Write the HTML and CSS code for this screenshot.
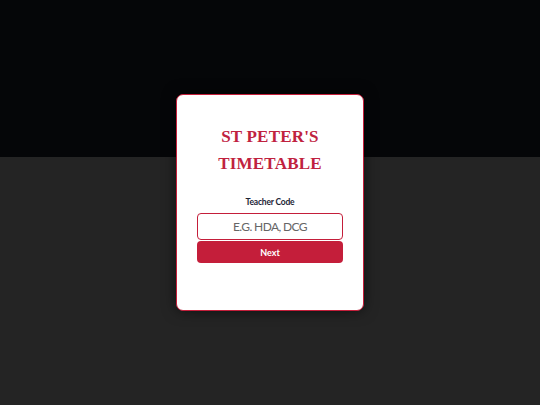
FILE: index.html
```html
<!DOCTYPE html>
<html>
<head>
<meta charset="utf-8">
<link rel="stylesheet" href="styles.css">
</head>
<body>
<div class="page">
  <div class="bg-top"></div>
  <div class="bg-bottom"></div>
  <div class="overlay">
    <div class="card">
      <h1 class="title">ST PETER'S<br>TIMETABLE</h1>
      <label class="label" for="code">Teacher Code</label>
      <input class="input" id="code" type="text" placeholder="E.G. HDA, DCG">
      <button class="btn">Next</button>
    </div>
  </div>
</div>
</body>
</html>
```
FILE: styles.css
```css
html, body {
  margin: 0;
  padding: 0;
  width: 540px;
  height: 405px;
  overflow: hidden;
}
body {
  font-family: Lato, "Liberation Sans", sans-serif;
}
.page {
  position: relative;
  width: 540px;
  height: 405px;
  display: flex;
  flex-direction: column;
}
.bg-top {
  height: 157px;
  background: #050608;
}
.bg-bottom {
  flex: 1;
  background: #242424;
}
.overlay {
  position: absolute;
  inset: 0;
  display: flex;
  align-items: center;
  justify-content: center;
}
.card {
  box-sizing: border-box;
  width: 188px;
  height: 217px;
  background: #fff;
  border: 1.5px solid #c41e3a;
  border-radius: 7px;
  box-shadow: 0 0 14px rgba(0,0,0,0.55);
  padding: 28px 20px 0;
  display: flex;
  flex-direction: column;
  align-items: center;
}
.title {
  margin: 0;
  font-family: "Liberation Serif", "DejaVu Serif", serif;
  font-weight: bold;
  font-size: 17px;
  line-height: 27px;
  color: #c0223f;
  text-align: center;
  letter-spacing: 0.2px;
}
.label {
  margin-top: 19px;
  font-size: 8.5px;
  font-weight: bold;
  line-height: 12px;
  color: #1c2536;
  letter-spacing: -0.2px;
}
.input {
  box-sizing: border-box;
  margin-top: 5px;
  width: 146px;
  height: 27px;
  border: 1px solid #c41e3a;
  border-radius: 4px;
  font-family: Lato, "Liberation Sans", sans-serif;
  font-size: 12px;
  letter-spacing: -0.6px;
  text-align: center;
  color: #333;
  outline: none;
  padding: 0;
}
.input::placeholder {
  color: #666;
}
.btn {
  width: 146px;
  height: 22px;
  margin-top: 1px;
  border: none;
  border-radius: 4px;
  background: #c41e3a;
  color: #fff;
  font-family: Lato, "Liberation Sans", sans-serif;
  font-size: 9px;
  font-weight: bold;
  padding: 0;
}
```
